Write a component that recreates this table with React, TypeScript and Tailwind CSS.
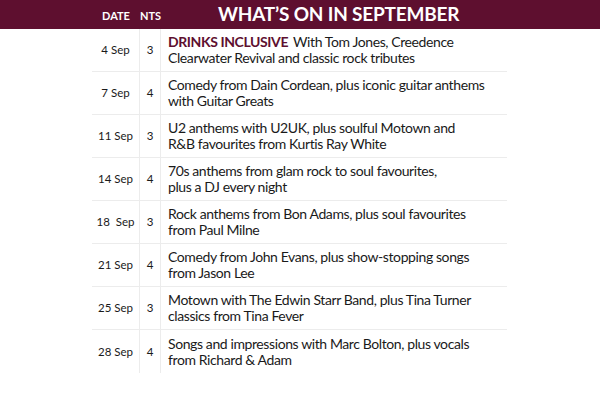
const rows = [
  { date: '4 Sep', nts: '3', lead: 'DRINKS INCLUSIVE', text: ['With Tom Jones, Creedence', 'Clearwater Revival and classic rock tributes'] },
  { date: '7 Sep', nts: '4', text: ['Comedy from Dain Cordean, plus iconic guitar anthems', 'with Guitar Greats'] },
  { date: '11 Sep', nts: '3', text: ['U2 anthems with U2UK, plus soulful Motown and', 'R&B favourites from Kurtis Ray White'] },
  { date: '14 Sep', nts: '4', text: ['70s anthems from glam rock to soul favourites,', 'plus a DJ every night'] },
  { date: '18  Sep', nts: '3', text: ['Rock anthems from Bon Adams, plus soul favourites', 'from Paul Milne'] },
  { date: '21 Sep', nts: '4', text: ['Comedy from John Evans, plus show-stopping songs', 'from Jason Lee'] },
  { date: '25 Sep', nts: '3', text: ['Motown with The Edwin Starr Band, plus Tina Turner', 'classics from Tina Fever'] },
  { date: '28 Sep', nts: '4', text: ['Songs and impressions with Marc Bolton, plus vocals', 'from Richard & Adam'] },
];

export default function App() {
  return (
    <div className="w-[600px] h-[400px] bg-white text-[#1a1a1a]" style={{ fontFamily: 'Lato, "Open Sans", sans-serif' }}>
      {/* Header */}
      <div className="h-[29px] bg-[#5e0f2f] flex items-center text-white">
        <div className="w-[92px]" />
        <div className="w-[48px] text-center text-[11px] font-bold pt-[3px]">DATE</div>
        <div className="w-[21px] text-center text-[11px] font-bold pt-[3px]">NTS</div>
        <div className="flex-1 pl-[57px] text-[19px] font-bold tracking-[-0.2px]">WHAT’S ON IN SEPTEMBER</div>
      </div>

      {/* Rows */}
      <div className="pl-[92px] w-[507px]">
        {rows.map((r, i) => (
          <div key={i} className={`flex h-[43px] ${i < rows.length - 1 ? 'border-b border-[#ececec]' : ''}`}>
            <div className="w-[48px] flex items-center justify-center text-[11.5px] whitespace-pre border-r border-[#ececec]">{r.date}</div>
            <div className="w-[21px] flex items-center justify-center text-[11.5px] border-r border-[#ececec]">{r.nts}</div>
            <div className="flex-1 pl-[7px] flex flex-col justify-center text-[14px] leading-[16px] tracking-[-0.4px]">
              <div>
                {r.lead && <span className="font-bold text-[#5e0f2f] mr-[5px]">{r.lead}</span>}
                {r.text[0]}
              </div>
              <div>{r.text[1]}</div>
            </div>
          </div>
        ))}
      </div>
    </div>
  );
}
